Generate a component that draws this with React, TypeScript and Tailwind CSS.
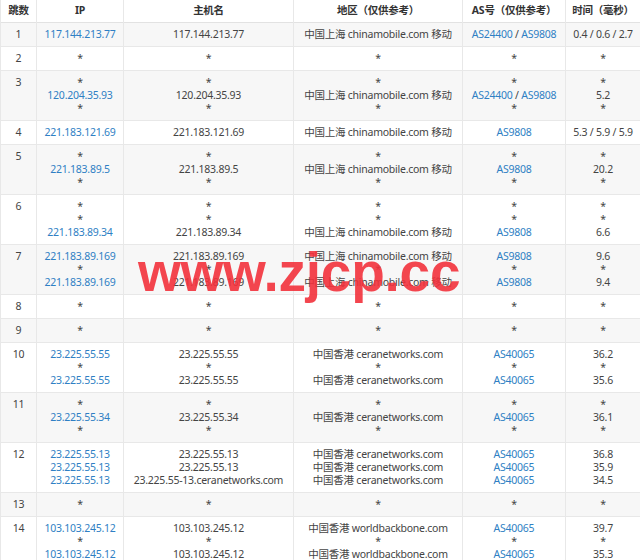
const rows: [string, string[][]][] = [
  ['1', [['117.144.213.77', '117.144.213.77', '中国上海 chinamobile.com 移动', 'AS24400 / AS9808', '0.4 / 0.6 / 2.7']]],
  ['2', [['*', '*', '*', '*', '*']]],
  ['3', [['*', '*', '*', '*', '*'], ['120.204.35.93', '120.204.35.93', '中国上海 chinamobile.com 移动', 'AS24400 / AS9808', '5.2'], ['*', '*', '*', '*', '*']]],
  ['4', [['221.183.121.69', '221.183.121.69', '中国上海 chinamobile.com 移动', 'AS9808', '5.3 / 5.9 / 5.9']]],
  ['5', [['*', '*', '*', '*', '*'], ['221.183.89.5', '221.183.89.5', '中国上海 chinamobile.com 移动', 'AS9808', '20.2'], ['*', '*', '*', '*', '*']]],
  ['6', [['*', '*', '*', '*', '*'], ['*', '*', '*', '*', '*'], ['221.183.89.34', '221.183.89.34', '中国上海 chinamobile.com 移动', 'AS9808', '6.6']]],
  ['7', [['221.183.89.169', '221.183.89.169', '中国上海 chinamobile.com 移动', 'AS9808', '9.6'], ['*', '*', '*', '*', '*'], ['221.183.89.169', '221.183.89.169', '中国上海 chinamobile.com 移动', 'AS9808', '9.4']]],
  ['8', [['*', '*', '*', '*', '*']]],
  ['9', [['*', '*', '*', '*', '*']]],
  ['10', [['23.225.55.55', '23.225.55.55', '中国香港 ceranetworks.com', 'AS40065', '36.2'], ['*', '*', '*', '*', '*'], ['23.225.55.55', '23.225.55.55', '中国香港 ceranetworks.com', 'AS40065', '35.6']]],
  ['11', [['*', '*', '*', '*', '*'], ['23.225.55.34', '23.225.55.34', '中国香港 ceranetworks.com', 'AS40065', '36.1'], ['*', '*', '*', '*', '*']]],
  ['12', [['23.225.55.13', '23.225.55.13', '中国香港 ceranetworks.com', 'AS40065', '36.8'], ['23.225.55.13', '23.225.55.13', '中国香港 ceranetworks.com', 'AS40065', '35.9'], ['23.225.55.13', '23.225.55-13.ceranetworks.com', '中国香港 ceranetworks.com', 'AS40065', '34.5']]],
  ['13', [['*', '*', '*', '*', '*']]],
  ['14', [['103.103.245.12', '103.103.245.12', '中国香港 worldbackbone.com', 'AS40065', '39.7'], ['*', '*', '*', '*', '*'], ['103.103.245.12', '103.103.245.12', '中国香港 worldbackbone.com', 'AS40065', '35.3']]],
];

function AsCell({ v }: { v: string }) {
  if (v === '*') return <>*</>;
  const parts = v.split(' / ');
  return (
    <>
      {parts.map((p, i) => (
        <span key={i}>
          {i > 0 && <span className="text-[#444]"> / </span>}
          <span className="text-[#2f7fc4]">{p}</span>
        </span>
      ))}
    </>
  );
}

export default function App() {
  const cell = 'border-x border-[#e8e8e8] px-0 py-[5px] text-center align-top whitespace-nowrap';
  return (
    <div className="relative h-[560px] w-[640px] overflow-hidden bg-white text-[10.5px] leading-[13px] tracking-[-0.25px] text-[#444]" style={{ fontFamily: '"Noto Sans", "Noto Sans CJK SC", sans-serif' }}>
      <table className="w-full table-fixed border-collapse">
        <colgroup>
          <col className="w-[36px]" />
          <col className="w-[87px]" />
          <col className="w-[170px]" />
          <col className="w-[169px]" />
          <col className="w-[103px]" />
          <col className="w-[75px]" />
        </colgroup>
        <thead>
          <tr className="h-[22px] shadow-[0_2px_3px_rgba(0,0,0,0.08)] border-b border-[#e2e2e2]">
            {['跳数', 'IP', '主机名', '地区（仅供参考）', 'AS号（仅供参考）', '时间（毫秒）'].map((h) => (
              <th key={h} className="border-x border-[#e8e8e8] text-center font-bold text-[#333] whitespace-nowrap">{h}</th>
            ))}
          </tr>
        </thead>
        <tbody>
          {rows.map(([n, lines], ri) => (
            <tr key={n} className={`border-b border-[#e8e8e8] ${ri % 2 === 0 ? 'bg-[#f7f7f7]' : 'bg-white'}`}>
              <td className={cell}>{n}</td>
              {[0, 1, 2, 3, 4].map((c) => (
                <td key={c} className={cell}>
                  {lines.map((l, li) => (
                    <div key={li} className={c === 0 && l[0] !== '*' ? 'text-[#2f7fc4]' : ''}>
                      {c === 3 ? <AsCell v={l[3]} /> : l[c]}
                    </div>
                  ))}
                </td>
              ))}
            </tr>
          ))}
        </tbody>
      </table>
      <div
        className="absolute left-[138px] top-[245px] text-[55px] font-bold leading-none text-[#f2313b]/90"
        style={{ fontFamily: '"Liberation Sans", Arial, sans-serif' }}
      >
        www.zjcp.cc
      </div>
    </div>
  );
}
